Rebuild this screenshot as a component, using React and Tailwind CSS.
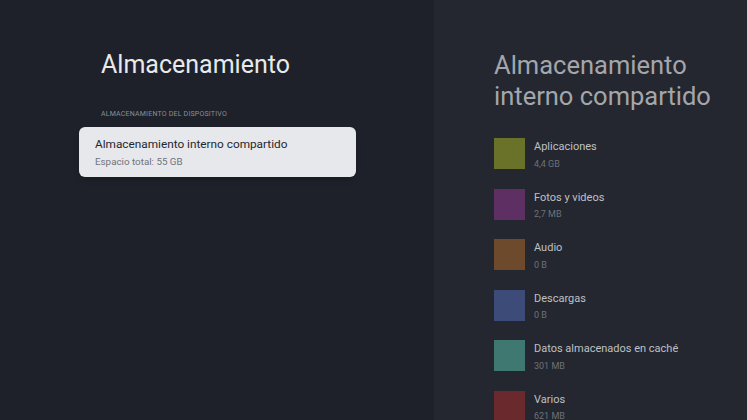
export default function App() {
  const items = [
    { name: "Aplicaciones", size: "4,4 GB", color: "bg-[#6a7128]" },
    { name: "Fotos y videos", size: "2,7 MB", color: "bg-[#5d2f63]" },
    { name: "Audio", size: "0 B", color: "bg-[#6c4a2b]" },
    { name: "Descargas", size: "0 B", color: "bg-[#3d4b78]" },
    { name: "Datos almacenados en caché", size: "301 MB", color: "bg-[#3e7871]" },
    { name: "Varios", size: "621 MB", color: "bg-[#6a2a2d]" },
  ];

  return (
    <div className="flex h-[420px] w-[747px] overflow-hidden font-['Roboto',sans-serif]">
      <div className="w-[434px] shrink-0 bg-[#1e2129] pt-[50px]">
        <h1 className="pl-[101px] text-[25px] leading-[30px] text-[#e8e9ec]">Almacenamiento</h1>
        <div className="mt-[29px] pl-[101px] text-[7px] uppercase tracking-[0.2px] text-[#8b8f96]">
          Almacenamiento del dispositivo
        </div>
        <div className="ml-[79px] mt-[7px] w-[277px] rounded-[6px] bg-[#e7e8ec] px-[16px] pb-[8px] pt-[8px] shadow-md">
          <div className="text-[11.8px] leading-[18px] text-[#25272c]">Almacenamiento interno compartido</div>
          <div className="mt-[2px] text-[9.8px] leading-[14px] text-[#70737a]">Espacio total: 55 GB</div>
        </div>
      </div>
      <div className="flex-1 bg-[#24272f] pl-[60px] pt-[50px]">
        <h2 className="text-[25.5px] leading-[31px] text-[#a3a6ab]">
          Almacenamiento
          <br />
          interno compartido
        </h2>
        <div className="mt-[26px] flex flex-col gap-[19.6px]">
          {items.map((it, i) => (
            <div key={i} className="flex h-[31px] items-start">
              <div className={`h-[31px] w-[31px] shrink-0 ${it.color}`} />
              <div className="ml-[9px] pt-[1px]">
                <div className="text-[11px] leading-[16px] text-[#bfc1c5]">{it.name}</div>
                <div className="mt-[2.5px] text-[9px] leading-[12px] text-[#6e727a]">{it.size}</div>
              </div>
            </div>
          ))}
        </div>
      </div>
    </div>
  );
}
